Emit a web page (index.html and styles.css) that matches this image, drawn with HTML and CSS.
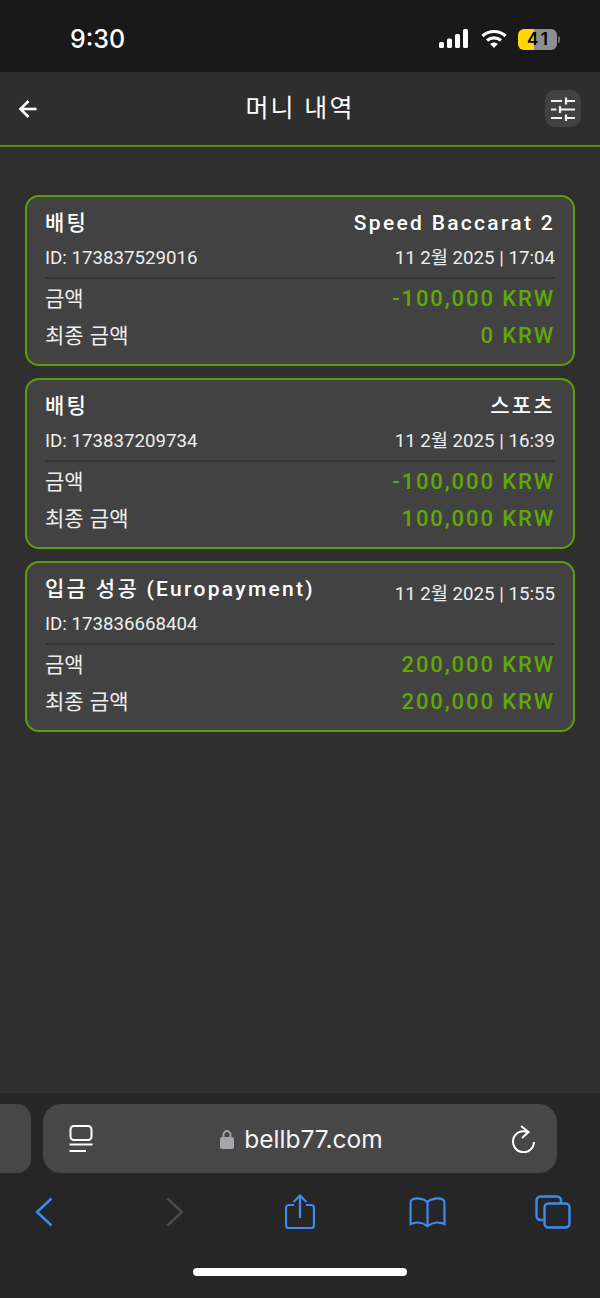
FILE: index.html
```html
<!DOCTYPE html>
<html lang="ko">
<head>
    <meta charset="UTF-8">
    <meta name="viewport" content="width=device-width, initial-scale=1.0">
    <title>머니 내역</title>
    <link rel="stylesheet" href="styles.css">
</head>
<body>
    <div class="statusbar">
        <span class="clock">9:30</span>
        <div class="status-icons">
            <svg class="signal" width="30" height="20" viewBox="0 0 30 20" fill="#fff">
                <rect x="0" y="13" width="5" height="6" rx="1.5"/>
                <rect x="8" y="9.5" width="5" height="9.5" rx="1.5"/>
                <rect x="16" y="5" width="5" height="14" rx="1.5"/>
                <rect x="24" y="0" width="5" height="19" rx="1.5"/>
            </svg>
            <svg class="wifi" width="26" height="20" viewBox="0 0 26 20" fill="none" stroke="#fff" stroke-width="3.2">
                <path d="M1.5 7 C8 1 18 1 24.5 7"/>
                <path d="M6 11.5 C10 8 16 8 20 11.5"/>
                <path d="M13 19 L9.2 15 C11.5 13 14.5 13 16.8 15 Z" fill="#fff" stroke="none"/>
            </svg>
            <div class="battery"><span class="battery-num">41</span></div>
            <div class="battery-cap"></div>
        </div>
    </div>

    <header class="topbar">
        <svg class="back" width="20" height="20" viewBox="0 0 20 20" fill="none" stroke="#fff" stroke-width="2.6">
            <path d="M18.5 10 H2.5"/>
            <path d="M10.5 2 L2.5 10 L10.5 18"/>
        </svg>
        <h1 class="title">머니 내역</h1>
        <div class="filter-btn">
            <svg width="24" height="24" viewBox="0 0 24 24" fill="none" stroke="#f0f0f0" stroke-width="2.2">
                <path d="M0 4 H11 M15 0.500 V7.500 M15 4 H24"/>
                <path d="M0 12.500 H5.500 M9 9 V16 M9 12.500 H24"/>
                <path d="M0 21 H11 M15 17.500 V24 M15 21 H24"/>
            </svg>
        </div>
    </header>

    <main class="list">
        <div class="card">
            <div class="row row-head">
                <span class="name">배팅</span>
                <span class="name">Speed Baccarat 2</span>
            </div>
            <div class="row row-meta">
                <span>ID: 173837529016</span>
                <span>11 2월 2025 | 17:04</span>
            </div>
            <div class="row row-amount">
                <span>금액</span>
                <span class="money">-100,000 KRW</span>
            </div>
            <div class="row row-final">
                <span>최종 금액</span>
                <span class="money">0 KRW</span>
            </div>
        </div>

        <div class="card">
            <div class="row row-head">
                <span class="name">배팅</span>
                <span class="name">스포츠</span>
            </div>
            <div class="row row-meta">
                <span>ID: 173837209734</span>
                <span>11 2월 2025 | 16:39</span>
            </div>
            <div class="row row-amount">
                <span>금액</span>
                <span class="money">-100,000 KRW</span>
            </div>
            <div class="row row-final">
                <span>최종 금액</span>
                <span class="money">100,000 KRW</span>
            </div>
        </div>

        <div class="card">
            <div class="row row-head">
                <span class="name">입금 성공 (Europayment)</span>
                <span class="date">11 2월 2025 | 15:55</span>
            </div>
            <div class="row row-meta">
                <span>ID: 173836668404</span>
            </div>
            <div class="row row-amount">
                <span>금액</span>
                <span class="money">200,000 KRW</span>
            </div>
            <div class="row row-final">
                <span>최종 금액</span>
                <span class="money">200,000 KRW</span>
            </div>
        </div>
    </main>

    <div class="browser">
        <div class="url-row">
            <div class="prev-tab"></div>
            <div class="url-bar">
                <svg class="reader" width="24" height="28" viewBox="0 0 24 28" fill="none" stroke="#fff" stroke-width="2">
                    <rect x="1.500" y="1" width="21" height="14" rx="3.500"/>
                    <path d="M0.500 19.500 H23.500"/>
                    <path d="M0.500 26 H17"/>
                </svg>
                <div class="address">
                    <svg width="14" height="20" viewBox="0 0 14 20">
                        <path d="M3.500 9 V5.500 a3.500 3.500 0 0 1 7 0 V9" fill="none" stroke="#a6a6ab" stroke-width="1.800"/>
                        <rect x="0" y="8" width="14" height="12" rx="2" fill="#a6a6ab"/>
                    </svg>
                    <span class="domain">bellb77.com</span>
                </div>
                <svg class="reload" width="24" height="28" viewBox="0 0 24 28" fill="none" stroke="#fff" stroke-width="2">
                    <path d="M15 6.800 A10.500 10.500 0 1 0 22 17"/>
                    <path d="M9 1 L16.500 7 L10 13"/>
                </svg>
            </div>
        </div>
        <div class="toolbar">
            <div class="tool">
                <svg width="18" height="30" viewBox="0 0 18 30" fill="none" stroke="#3d8cf0" stroke-width="2.400">
                    <path d="M16.500 1.500 L2 15 L16.500 28.500"/>
                </svg>
            </div>
            <div class="tool">
                <svg width="18" height="30" viewBox="0 0 18 30" fill="none" stroke="#4c4c4c" stroke-width="2.400">
                    <path d="M1.500 1.500 L16 15 L1.500 28.500"/>
                </svg>
            </div>
            <div class="tool">
                <svg width="30" height="36" viewBox="0 0 30 36" fill="none" stroke="#3d8cf0" stroke-width="2.200">
                    <path d="M9 11 H4 a3 3 0 0 0 -3 3 V31 a3 3 0 0 0 3 3 H26 a3 3 0 0 0 3 -3 V14 a3 3 0 0 0 -3 -3 H21"/>
                    <path d="M15 24 V2"/>
                    <path d="M8.500 8 L15 1.500 L21.500 8"/>
                </svg>
            </div>
            <div class="tool">
                <svg width="37" height="31" viewBox="0 0 38 32" fill="none" stroke="#3d8cf0" stroke-width="2.200">
                    <path d="M19 5 C15 1.500 7 0.500 3.500 2.500 C2 3.500 1.500 4.500 1.500 6 V28 C7 25.500 14 26 19 30 C24 26 31 25.500 36.500 28 V6 C36.500 4.500 36 3.500 34.500 2.500 C31 0.500 23 1.500 19 5 Z"/>
                    <path d="M19 5 V30"/>
                </svg>
            </div>
            <div class="tool">
                <svg width="36" height="34" viewBox="0 0 36 34" fill="none" stroke="#3d8cf0" stroke-width="2.400">
                    <path d="M8.500 25 H5.500 a4 4 0 0 1 -4 -4 V5.500 a4 4 0 0 1 4 -4 H22 a4 4 0 0 1 4 4 V8.500"/>
                    <rect x="9.500" y="8.500" width="25" height="24" rx="4"/>
                </svg>
            </div>
        </div>
        <div class="home-row">
            <div class="home-bar"></div>
        </div>
    </div>
</body>
</html>
```

FILE: styles.css
```css
* {
    box-sizing: border-box;
}
html, body {
    height: 100%;
}
body {
    margin: 0;
    display: flex;
    flex-direction: column;
    overflow: hidden;
    font-family: Roboto, "Noto Sans CJK KR", sans-serif;
    background-color: #2f2f2f;
    color: #fff;
}

/* status bar */
.statusbar {
    height: 72px;
    flex: none;
    display: flex;
    align-items: center;
    justify-content: space-between;
    padding: 6px 40px 0 70px;
    background-color: #191919;
}
.clock {
    font-family: Inter, "Liberation Sans", sans-serif;
    font-size: 25px;
    font-weight: 500;
}
.status-icons {
    display: flex;
    align-items: center;
}
.signal {
    margin-right: 12px;
}
.wifi {
    margin-right: 11px;
}
.battery {
    width: 39px;
    height: 21px;
    border-radius: 6px;
    background: linear-gradient(to right, #ffd60a 41%, #8e8e8e 41%);
    display: flex;
    align-items: center;
    justify-content: center;
}
.battery-num {
    font-family: Inter, "Liberation Sans", sans-serif;
    font-size: 17px;
    font-weight: 600;
    letter-spacing: 3px;
    margin-right: -3px;
    color: #000;
}
.battery-cap {
    width: 2px;
    height: 7px;
    margin-left: 1px;
    border-radius: 0 2px 2px 0;
    background-color: #6e6e6e;
}

/* page header */
.topbar {
    height: 75px;
    flex: none;
    display: flex;
    align-items: center;
    padding: 0 19px 0 18px;
    background-color: #2e2e2e;
    border-bottom: 2px solid #4f8c0c;
}
.back {
    margin-right: 17px;
}
.title {
    flex: 1;
    margin: 0;
    padding-bottom: 6px;
    text-align: center;
    font-size: 25px;
    font-weight: 400;
    letter-spacing: 2.200px;
}
.filter-btn {
    width: 36px;
    height: 37px;
    display: flex;
    align-items: center;
    justify-content: center;
    border-radius: 10px;
    background-color: #424242;
}

/* cards */
.list {
    flex: 1;
    display: flex;
    flex-direction: column;
    gap: 12px;
    padding: 48px 25px 0;
}
.card {
    height: 171px;
    padding: 8px 18px 0;
    border: 2px solid #5a9e0a;
    border-radius: 14px;
    background-color: #424242;
}
.row {
    display: flex;
    justify-content: space-between;
    align-items: baseline;
}
.row-head {
    height: 36px;
    line-height: 36px;
}
.name {
    font-size: 21px;
    font-weight: 500;
    letter-spacing: 2.300px;
}
.date {
    margin-top: 9px;
    align-self: center;
    font-size: 18.700px;
    color: #eee;
}
.row-meta {
    height: 38px;
    line-height: 34px;
    font-size: 18.700px;
    color: #eee;
    border-bottom: 2px solid #343434;
}
.row-amount {
    height: 38px;
    padding-top: 1px;
    line-height: 38px;
    font-size: 21px;
    word-spacing: 1px;
    color: #eee;
}
.row-final {
    height: 36px;
    padding-top: 1px;
    line-height: 35px;
    font-size: 21px;
    word-spacing: 1px;
    color: #eee;
}
.money {
    font-size: 22px;
    font-weight: 500;
    letter-spacing: 1.900px;
    word-spacing: 0;
    color: #5fa805;
}

/* safari chrome */
.browser {
    height: 205px;
    flex: none;
    background-color: #262626;
}
.url-row {
    display: flex;
    gap: 12px;
    padding-top: 11px;
}
.prev-tab {
    width: 31px;
    height: 69px;
    border-radius: 0 14px 14px 0;
    background-color: #474747;
}
.url-bar {
    width: 514px;
    height: 69px;
    display: flex;
    align-items: center;
    justify-content: space-between;
    padding: 0 21px 0 26px;
    border-radius: 18px;
    background-color: #474747;
}
.address {
    display: flex;
    align-items: center;
    gap: 10px;
    margin-right: 2px;
}
.domain {
    font-family: Inter, "Liberation Sans", sans-serif;
    font-size: 24.500px;
    color: #f4f4f4;
}
.toolbar {
    height: 74px;
    display: grid;
    grid-template-columns: 131px 125px 127px 126px 38px;
    align-items: center;
    padding: 4px 0 0 25px;
}
.tool {
    width: 38px;
    display: flex;
    justify-content: center;
}
.home-row {
    display: flex;
    justify-content: center;
    padding-top: 21px;
}
.home-bar {
    width: 214px;
    height: 8px;
    border-radius: 4px;
    background-color: #fff;
}
```
